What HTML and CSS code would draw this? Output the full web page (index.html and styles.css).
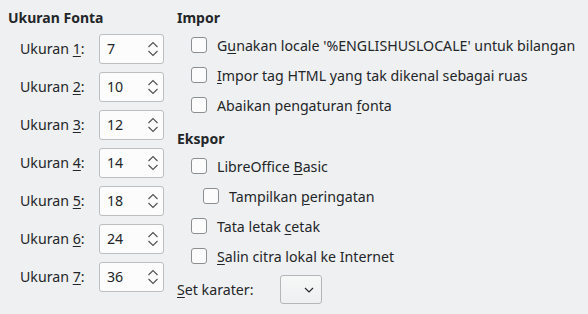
FILE: index.html
```html
<!DOCTYPE html>
<html>
<head>
<meta charset="utf-8">
<link rel="stylesheet" href="styles.css">
</head>
<body>
<div class="page">
  <section class="sizes">
    <h2 class="heading">Ukuran Fonta</h2>
    <div class="size-list">
      <div class="size-row"><span class="size-label">Ukuran <u>1</u>:</span><div class="spin"><span class="spin-value">7</span><svg class="spin-arrows" width="12" height="16" viewBox="0 0 12 16"><path d="M1.5 6 L6 1.5 L10.5 6 M1.5 10 L6 14.5 L10.5 10" fill="none" stroke="#4d5052" stroke-width="1.1"/></svg></div></div>
      <div class="size-row"><span class="size-label">Ukuran <u>2</u>:</span><div class="spin"><span class="spin-value">10</span><svg class="spin-arrows" width="12" height="16" viewBox="0 0 12 16"><path d="M1.5 6 L6 1.5 L10.5 6 M1.5 10 L6 14.5 L10.5 10" fill="none" stroke="#4d5052" stroke-width="1.1"/></svg></div></div>
      <div class="size-row"><span class="size-label">Ukuran <u>3</u>:</span><div class="spin"><span class="spin-value">12</span><svg class="spin-arrows" width="12" height="16" viewBox="0 0 12 16"><path d="M1.5 6 L6 1.5 L10.5 6 M1.5 10 L6 14.5 L10.5 10" fill="none" stroke="#4d5052" stroke-width="1.1"/></svg></div></div>
      <div class="size-row"><span class="size-label">Ukuran <u>4</u>:</span><div class="spin"><span class="spin-value">14</span><svg class="spin-arrows" width="12" height="16" viewBox="0 0 12 16"><path d="M1.5 6 L6 1.5 L10.5 6 M1.5 10 L6 14.5 L10.5 10" fill="none" stroke="#4d5052" stroke-width="1.1"/></svg></div></div>
      <div class="size-row"><span class="size-label">Ukuran <u>5</u>:</span><div class="spin"><span class="spin-value">18</span><svg class="spin-arrows" width="12" height="16" viewBox="0 0 12 16"><path d="M1.5 6 L6 1.5 L10.5 6 M1.5 10 L6 14.5 L10.5 10" fill="none" stroke="#4d5052" stroke-width="1.1"/></svg></div></div>
      <div class="size-row"><span class="size-label">Ukuran <u>6</u>:</span><div class="spin"><span class="spin-value">24</span><svg class="spin-arrows" width="12" height="16" viewBox="0 0 12 16"><path d="M1.5 6 L6 1.5 L10.5 6 M1.5 10 L6 14.5 L10.5 10" fill="none" stroke="#4d5052" stroke-width="1.1"/></svg></div></div>
      <div class="size-row"><span class="size-label">Ukuran <u>7</u>:</span><div class="spin"><span class="spin-value">36</span><svg class="spin-arrows" width="12" height="16" viewBox="0 0 12 16"><path d="M1.5 6 L6 1.5 L10.5 6 M1.5 10 L6 14.5 L10.5 10" fill="none" stroke="#4d5052" stroke-width="1.1"/></svg></div></div>
    </div>
  </section>
  <section class="options">
    <h2 class="heading">Impor</h2>
    <div class="check-row"><span class="box"></span><span>G<u>u</u>nakan locale '%ENGLISHUSLOCALE' untuk bilangan</span></div>
    <div class="check-row"><span class="box"></span><span><u>I</u>mpor tag HTML yang tak dikenal sebagai ruas</span></div>
    <div class="check-row"><span class="box"></span><span>Abaikan pengaturan <u>f</u>onta</span></div>
    <h2 class="heading heading-gap">Ekspor</h2>
    <div class="check-row"><span class="box"></span><span>LibreOffice <u>B</u>asic</span></div>
    <div class="check-row nested"><span class="box"></span><span>Tampilkan <u>p</u>eringatan</span></div>
    <div class="check-row"><span class="box"></span><span>Tata letak <u>c</u>etak</span></div>
    <div class="check-row"><span class="box"></span><span><u>S</u>alin citra lokal ke Internet</span></div>
    <div class="charset-row"><span class="charset-label"><u>S</u>et karater:</span><div class="combo"><svg width="10" height="6" viewBox="0 0 10 6"><path d="M1 1 L5 5 L9 1" fill="none" stroke="#232629" stroke-width="1.1"/></svg></div></div>
  </section>
</div>
</body>
</html>
```

FILE: styles.css
```css
html, body {
  margin: 0;
  padding: 0;
  background: #eff0f1;
}
body {
  font-family: "Noto Sans", "DejaVu Sans", sans-serif;
  font-size: 14.2px;
  color: #232629;
}
.page {
  display: flex;
  padding: 6px 0 0 8px;
}
.heading {
  margin: 0;
  font-size: 14px;
  font-weight: bold;
  line-height: 24px;
  height: 24px;
}
.sizes {
  width: 169px;
  flex: none;
}
.size-list {
  display: flex;
  flex-direction: column;
  gap: 9px;
  margin-top: 4px;
}
.size-row {
  display: flex;
  align-items: center;
  height: 29px;
  padding-left: 12px;
}
.size-label {
  width: 79px;
}
u {
  text-decoration: underline;
  text-underline-offset: 2px;
  text-decoration-thickness: 1px;
}
.spin {
  box-sizing: border-box;
  width: 65px;
  height: 30px;
  background: #fcfcfc;
  border: 1px solid #bcbebf;
  border-radius: 3px;
  display: flex;
  align-items: center;
  justify-content: space-between;
  padding: 0 4px 0 7px;
}
.spin-arrows {
  display: block;
}
.options {
  flex: 1;
}
.check-row {
  display: flex;
  align-items: center;
  height: 30px;
  padding-left: 14px;
  gap: 10px;
  white-space: nowrap;
}
.check-row.nested {
  padding-left: 26px;
}
.box {
  box-sizing: border-box;
  width: 16px;
  height: 16px;
  border: 1px solid #8c8f91;
  border-radius: 3px;
  background: #fcfcfc;
  flex: none;
}
.heading-gap {
  margin-top: 7px;
}
.charset-row {
  display: flex;
  align-items: center;
  height: 29px;
  margin-top: 4px;
}
.charset-label {
  width: 103px;
}
.combo {
  box-sizing: border-box;
  width: 42px;
  height: 29px;
  border: 1px solid #b4b6b8;
  border-radius: 3px;
  background: linear-gradient(#f6f7f7, #eeeff0);
  display: flex;
  align-items: center;
  justify-content: flex-end;
  padding-right: 7px;
}
.combo svg {
  display: block;
}
```
